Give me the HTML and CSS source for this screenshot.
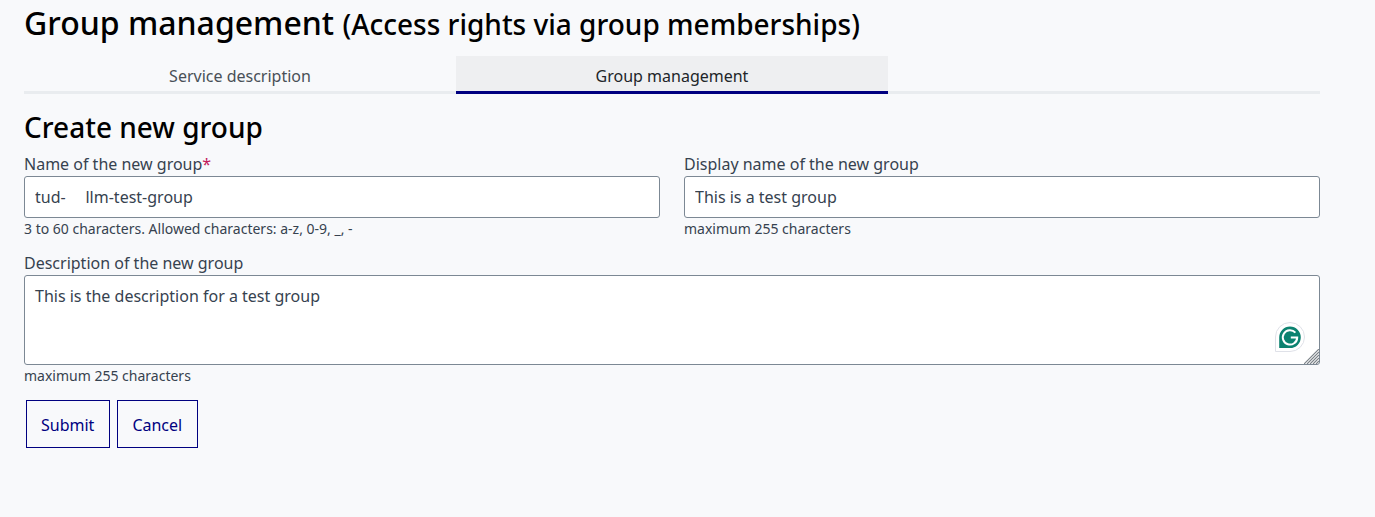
FILE: index.html
```html
<!DOCTYPE html>
<html lang="en">
<head>
<meta charset="utf-8">
<title>Group management</title>
<link rel="stylesheet" href="styles.css">
</head>
<body>
<main class="page">
  <h1 class="title">Group management <small class="subtitle">(Access rights via group memberships)</small></h1>
  <nav class="tabs">
    <a class="tab">Service description</a>
    <a class="tab tab-active">Group management</a>
  </nav>
  <h2 class="heading">Create new group</h2>
  <form class="form">
    <div class="row">
      <div class="field">
        <label class="label">Name of the new group<span class="req">*</span></label>
        <input class="input" type="text" value="tud-    &#8202;&#8202;llm-test-group">
        <div class="hint">3 to 60 characters. Allowed characters: a-z, 0-9, _, -</div>
      </div>
      <div class="field">
        <label class="label">Display name of the new group</label>
        <input class="input" type="text" value="This is a test group">
        <div class="hint">maximum 255 characters</div>
      </div>
    </div>
    <div class="field field-wide">
      <label class="label">Description of the new group</label>
      <div class="area-wrap">
        <textarea class="area">This is the description for a test group</textarea>
        <svg class="grammarly" width="30" height="30" viewBox="0 0 30 30" aria-hidden="true">
          <path d="M15 .5a14.5 14.5 0 0 1 0 29H.5V15A14.5 14.5 0 0 1 15 .5z" fill="#fff" stroke="#dfe1e8" stroke-width="1"/>
          <path d="M15 4.5a10.8 10.8 0 0 1 0 21.6H4.2V15.3A10.8 10.8 0 0 1 15 4.5z" fill="#0c8270"/>
          <path d="M20.4 10.6A7.2 7.2 0 1 0 22.2 15.6h-6.4" fill="none" stroke="#fff" stroke-width="2"/>
        </svg>
        <svg class="grip" width="15" height="15" viewBox="0 0 15 15" aria-hidden="true">
          <path d="M0 15L15 0M3 15L15 3M6 15L15 6M9 15L15 9M12 15L15 12" fill="none" stroke="#7b8288" stroke-width="1.2"/>
        </svg>
      </div>
      <div class="hint">maximum 255 characters</div>
    </div>
    <div class="actions">
      <button class="btn" type="button">Submit</button>
      <button class="btn" type="button">Cancel</button>
    </div>
  </form>
</main>
</body>
</html>
```
FILE: styles.css
```css
html, body { margin: 0; padding: 0; }
body {
  background: #f8f9fb;
  font-family: "Noto Sans", sans-serif;
  color: #36424f;
  height: 517px;
  overflow: hidden;
}
.page { width: 1296px; margin-left: 24px; }
.title {
  margin: 0;
  font-size: 32px;
  line-height: 46px;
  font-weight: 500;
  color: #000;
  white-space: pre;
  height: 56px;
}
.subtitle { font-size: 28px; font-weight: 500; }
.tabs { display: flex; border-bottom: 3px solid #e9ecef; height: 35px; }
.tab {
  width: 432px;
  text-align: center;
  font-size: 16px;
  line-height: 40px;
  height: 38px;
  color: #495057;
  margin-bottom: -3px;
}
.tab-active {
  background: #eeeff1;
  color: #212529;
  border-bottom: 3px solid #000080;
  height: 35px;
}
.heading {
  margin: 14px 0 0;
  font-size: 28px;
  line-height: 38px;
  font-weight: 500;
  color: #000;
}
.form { margin-top: 6px; }
.row { display: grid; grid-template-columns: 636px 636px; column-gap: 24px; }
.label { display: block; font-size: 16px; line-height: 24px; color: #36424f; }
.req { color: #c2185b; }
.input {
  display: block;
  box-sizing: border-box;
  width: 100%;
  height: 42px;
  padding: 0 10px;
  background: #fff;
  border: 1px solid #7c8894;
  border-radius: 3px;
  font: 16px "Noto Sans", sans-serif;
  color: #36424f;
  white-space: pre;
}
.hint { font-size: 14px; line-height: 21px; height: 21px; color: #36424f; }
.field-wide { margin-top: 12px; }
.area-wrap { position: relative; }
.area {
  display: block;
  box-sizing: border-box;
  width: 100%;
  height: 90px;
  padding: 8px 10px;
  background: #fff;
  border: 1px solid #7c8894;
  border-radius: 3px;
  font: 16px/24px "Noto Sans", sans-serif;
  color: #36424f;
  resize: none;
}
.grammarly { position: absolute; right: 15px; bottom: 13px; }
.grip { position: absolute; right: 1px; bottom: 1px; }
.actions { display: flex; gap: 7px; margin: 14px 0 0 2px; }
.btn {
  height: 48px;
  padding: 2px 15px 0 14px;
  background: transparent;
  border: 1px solid #000080;
  font: 16px "Noto Sans", sans-serif;
  color: #000080;
}
```
